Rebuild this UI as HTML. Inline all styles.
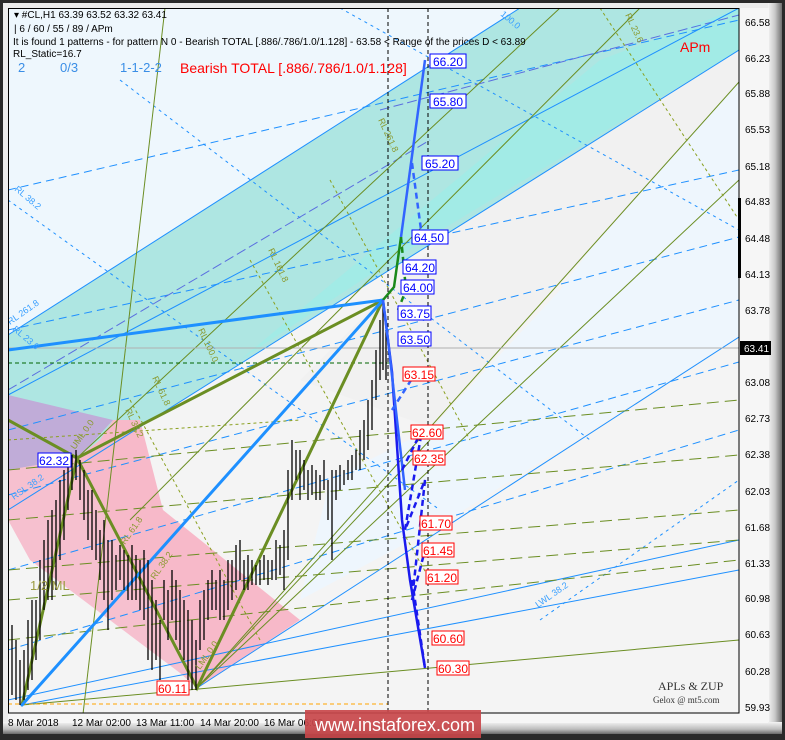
<!DOCTYPE html>
<html><head><meta charset="utf-8"><style>
html,body{margin:0;padding:0;width:785px;height:740px;overflow:hidden;background:#2a2a2a}
svg{display:block}
text{font-family:"Liberation Sans",sans-serif}
</style></head><body>
<svg width="785" height="740" viewBox="0 0 785 740" xmlns="http://www.w3.org/2000/svg">
<defs>
<linearGradient id="bev" x1="0" x2="1" y1="0" y2="0"><stop offset="0" stop-color="#f4f4f4"/><stop offset="0.5" stop-color="#c8c8c8"/><stop offset="1" stop-color="#707070"/></linearGradient>
<linearGradient id="bevb" x1="0" x2="0" y1="0" y2="1"><stop offset="0" stop-color="#f4f4f4"/><stop offset="0.6" stop-color="#bcbcbc"/><stop offset="1" stop-color="#6a6a6a"/></linearGradient>
<clipPath id="c"><rect x="8" y="8" width="731" height="705"/></clipPath>
</defs>
<rect x="0" y="0" width="785" height="740" fill="#2a2a2a"/>
<rect x="3" y="3" width="779" height="731" fill="#ececec"/>
<rect x="768" y="3" width="14" height="731" fill="url(#bev)"/>
<rect x="3" y="722" width="779" height="12" fill="url(#bevb)"/>
<rect x="739" y="8" width="30" height="714" fill="#f6f6f6"/>
<rect x="8" y="713" width="760" height="10" fill="#f6f6f6"/>

<g clip-path="url(#c)">
<rect x="8" y="8" width="731" height="705" fill="#f4f4f4"/>
<polygon points="8,8 520,8 8,340" fill="#eef7fd"/>
<!-- light blue wedge right -->
<polygon points="739,82 739,337 440,525 300,600 330,480 432,428 560,290 739,50" fill="#eef6fd"/>
<polygon points="432,428 739,82 739,50 560,160 440,240 300,380" fill="#f1f1f1"/>
<!-- cyan band -->
<polygon points="8,335 520,8 739,8 739,50 8,510" fill="#aee6e2"/>
<polygon points="240,360 600,60 739,8 739,50 400,255" fill="#a2ebe6"/>
<!-- purple -->
<polygon points="8,395 113,420 77,460 8,472" fill="#c0acd8"/>
<!-- pink -->
<polygon points="8,470 77,458 100,440 113,420 140,420 163,510 300,620 240,660 197,688 8,520" fill="#f7b9c9"/>
<polygon points="77,458 200,688 30,560 8,520 8,470" fill="#f6c0cf"/>

<g stroke="#1e90ff" stroke-width="1" stroke-dasharray="8,5" fill="none">
<line x1="8" y1="190" x2="739" y2="20"/>
<line x1="8" y1="330" x2="739" y2="170"/>
<line x1="8" y1="430" x2="739" y2="237"/>
<line x1="8" y1="495" x2="739" y2="300"/>
<line x1="8" y1="570" x2="739" y2="362"/>
<line x1="8" y1="650" x2="739" y2="430"/>
</g>
<g stroke="#1e90ff" stroke-width="1" stroke-dasharray="3,4" fill="none">
<line x1="120" y1="80" x2="590" y2="440"/>
<line x1="8" y1="200" x2="440" y2="510"/>
<line x1="340" y1="8" x2="739" y2="230"/>
<line x1="540" y1="620" x2="739" y2="480"/>
</g>
<g stroke="#5a6ee0" stroke-width="1" stroke-dasharray="10,4" fill="none">
<line x1="8" y1="390" x2="430" y2="140"/>
<line x1="380" y1="110" x2="739" y2="15"/>
</g>
<g stroke="#1e90ff" stroke-width="1" fill="none">
<line x1="8" y1="335" x2="520" y2="8"/>
<line x1="8" y1="510" x2="739" y2="50"/>
<line x1="8" y1="395" x2="739" y2="8"/>
<line x1="197" y1="688" x2="739" y2="337"/>
<line x1="22" y1="705" x2="739" y2="570"/>
<line x1="8" y1="700" x2="739" y2="540"/>
</g>
<g stroke="#6b8e23" stroke-width="1" fill="none">
<line x1="80" y1="740" x2="165" y2="8"/>
<line x1="197" y1="688" x2="739" y2="82"/>
<line x1="130" y1="520" x2="640" y2="8"/>
<line x1="77" y1="458" x2="560" y2="8"/>
<line x1="197" y1="688" x2="739" y2="180"/>
<line x1="22" y1="705" x2="739" y2="640"/>
<line x1="197" y1="688" x2="430" y2="440"/>
</g>
<g stroke="#6b8e23" stroke-width="1" stroke-dasharray="12,6" fill="none">
<line x1="8" y1="520" x2="739" y2="455"/>
<line x1="8" y1="570" x2="739" y2="510"/>
<line x1="8" y1="600" x2="739" y2="540"/>
<line x1="8" y1="640" x2="739" y2="560"/>
<line x1="8" y1="470" x2="739" y2="400"/>
</g>
<g stroke="#8aa020" stroke-width="1" stroke-dasharray="3,3" fill="none">
<line x1="250" y1="260" x2="430" y2="580"/>
<line x1="330" y1="180" x2="470" y2="440"/>
<line x1="130" y1="400" x2="260" y2="640"/>
<line x1="600" y1="8" x2="739" y2="220"/>
<line x1="8" y1="440" x2="300" y2="420"/>
</g>
<line x1="8" y1="348" x2="739" y2="348" stroke="#b0b0b0" stroke-width="1"/>
<line x1="8" y1="363" x2="390" y2="363" stroke="#006400" stroke-width="1" stroke-dasharray="4,3"/>
<line x1="8" y1="704" x2="388" y2="704" stroke="#ffa500" stroke-width="1" stroke-dasharray="4,3"/>
<g fill="none" stroke-linecap="round">
<polyline points="8,420 77,458 383,300" stroke="#6b8e23" stroke-width="3"/>
<polyline points="22,705 77,458 197,688 383,300" stroke="#6b8e23" stroke-width="3"/>
<line x1="197" y1="688" x2="383" y2="300" stroke="#6b8e23" stroke-width="2"/>
<line x1="8" y1="350" x2="383" y2="300" stroke="#1e90ff" stroke-width="3"/>
<line x1="22" y1="705" x2="383" y2="300" stroke="#1e90ff" stroke-width="3"/>
</g>
<path fill="none" stroke="#000" stroke-width="1.3" d="M12 625V695M16 640V700M20 660V705M24 650V700M28 620V690M32 600V680M36 600V660M40 560V640M44 540V610M48 520V600M52 510V600M56 500V590M60 480V560M64 470V540M68 460V510M72 455V490M76 450V480M80 460V500M84 470V520M88 490V540M92 490V550M96 510V560M100 530V580M104 520V600M108 540V630M112 540V600M116 555V590M120 545V580M124 550V590M128 555V600M132 545V600M136 555V600M140 560V610M144 550V620M148 560V660M152 580V670M156 600V660M160 620V680M164 580V620M168 590V640M172 570V620M176 580V640M180 590V650M184 600V660M188 610V680M192 620V690M196 640V690M200 600V650M204 590V640M208 580V620M212 570V610M216 580V610M220 570V620M224 580V620M228 560V610M232 560V600M236 545V590M240 540V580M244 560V590M248 555V590M252 560V585M256 565V585M260 560V585M264 555V580M268 560V585M272 560V580M276 540V580M280 545V575M284 530V590M288 470V560M292 440V500M296 450V480M300 450V500M304 460V490M308 470V500M312 465V495M316 470V500M320 475V500M324 460V490M328 480V520M332 470V560M336 470V500M340 465V490M344 470V485M348 460V480M352 455V480M356 450V470M360 430V470M364 420V460M368 400V450M372 380V430M376 350V400M380 320V380M383 300V370M386 330V380"/>
<line x1="388" y1="8" x2="388" y2="713" stroke="#000" stroke-dasharray="4,3"/>
<line x1="428" y1="8" x2="428" y2="713" stroke="#000" stroke-dasharray="4,3"/>
<g fill="none" stroke-width="2.5">
<polyline points="425,60 401,237" stroke="#3264ff"/>
<polyline points="412,163 422,237" stroke="#3264ff" stroke-dasharray="6,4"/>
<polyline points="401,237 394,287 383,300" stroke="#1a8a1a"/>
<polyline points="401,237 406,290 398,310" stroke="#1a8a1a" stroke-dasharray="6,4"/>
<polyline points="383,300 392,372 402,520 410,580 425,668" stroke="#1a1aee"/>
<polyline points="383,300 388,340 397,420 405,490" stroke="#3264ff"/>
<polyline points="392,410 415,374" stroke="#3264ff" stroke-dasharray="6,4"/>
<polyline points="402,470 422,430 405,530 425,480 412,600 425,550" stroke="#1a1aee" stroke-dasharray="6,4"/>
<polyline points="412,580 425,668" stroke="#1a1aee" stroke-dasharray="6,4"/>
</g>
<g font-size="9" fill="#8a9a30">
<text x="30" y="590" font-size="13" fill="#9a9a40">1/2 ML</text>
<text transform="translate(378,120) rotate(65)">RL 261.8</text>
<text transform="translate(268,250) rotate(65)">RL 161.8</text>
<text transform="translate(198,330) rotate(65)">RL 100.0</text>
<text transform="translate(152,378) rotate(65)">RL 61.8</text>
<text transform="translate(125,410) rotate(65)">RL 38.2</text>
<text transform="translate(125,545) rotate(-55)">RL 61.8</text>
<text transform="translate(155,580) rotate(-55)">RL 38.2</text>
<text transform="translate(75,450) rotate(-55)">UML 0.0</text>
<text transform="translate(200,670) rotate(-55)">LML 0.0</text>
<text transform="translate(625,15) rotate(65)">RL 23.6</text>
</g>
<g font-size="9" fill="#3aa0ff">
<text transform="translate(14,190) rotate(40)">RL 38.2</text>
<text transform="translate(10,325) rotate(-35)">RL 261.8</text>
<text transform="translate(12,330) rotate(40)">RL 23.6</text>
<text transform="translate(14,500) rotate(-35)">RSL 38.2</text>
<text transform="translate(538,608) rotate(-35)">LWL 38.2</text>
<text transform="translate(500,15) rotate(40)">100.0</text>
</g>
</g>
<rect x="8.5" y="8.5" width="730.5" height="704.5" fill="none" stroke="#000"/>

<g font-size="12" fill="#00f">
<g stroke="#00f" fill="#fff"><rect x="38" y="453" width="33" height="14"/><rect x="430" y="54" width="36" height="14"/><rect x="430" y="94" width="36" height="14"/><rect x="422" y="156" width="36" height="14"/><rect x="412" y="230" width="36" height="14"/><rect x="403" y="260" width="33" height="14"/><rect x="401" y="280" width="33" height="14"/><rect x="398" y="306" width="33" height="14"/><rect x="398" y="332" width="33" height="14"/></g>
<text x="39" y="465">62.32</text><text x="433" y="66">66.20</text><text x="433" y="106">65.80</text><text x="425" y="168">65.20</text><text x="414" y="242">64.50</text><text x="405" y="272">64.20</text><text x="403" y="292">64.00</text><text x="400" y="318">63.75</text><text x="400" y="344">63.50</text>
</g>
<g font-size="12" fill="#f00">
<g stroke="#f00" fill="#fff"><rect x="157" y="681" width="32" height="14"/><rect x="403" y="367" width="32" height="14"/><rect x="411" y="425" width="32" height="14"/><rect x="413" y="451" width="32" height="14"/><rect x="420" y="516" width="32" height="14"/><rect x="422" y="543" width="32" height="14"/><rect x="426" y="570" width="32" height="14"/><rect x="432" y="631" width="32" height="14"/><rect x="437" y="661" width="32" height="14"/></g>
<text x="158" y="693">60.11</text><text x="404" y="379">63.15</text><text x="412" y="437">62.60</text><text x="414" y="463">62.35</text><text x="421" y="528">61.70</text><text x="423" y="555">61.45</text><text x="427" y="582">61.20</text><text x="433" y="643">60.60</text><text x="438" y="673">60.30</text>
</g>

<g font-size="10" fill="#000">
<text x="14" y="18">▾ #CL,H1  63.39 63.52 63.32 63.41</text>
<text x="14" y="32">| 6 / 60 / 55 / 89 / APm</text>
<text x="13" y="45">It is found 1 patterns  -  for pattern N 0 - Bearish TOTAL [.886/.786/1.0/1.128] - 63.58 &lt; Range of the prices D &lt; 63.89</text>
<text x="13" y="57">RL_Static=16.7</text>
</g>
<g font-size="13" fill="#3a8ee6"><text x="18" y="72">2</text><text x="60" y="72">0/3</text><text x="120" y="72">1-1-2-2</text></g>
<text x="180" y="73" font-size="14" fill="#f00">Bearish TOTAL [.886/.786/1.0/1.128]</text>
<text x="680" y="52" font-size="14" fill="#f00">APm</text>
<text x="658" y="690" font-size="12" fill="#333" style="font-family:'Liberation Serif',serif">APLs &amp; ZUP</text>
<text x="653" y="703" font-size="9" fill="#333" style="font-family:'Liberation Serif',serif">Gelox @ mt5.com</text>

<rect x="738" y="198" width="3" height="80" fill="#000"/>
<g font-size="10" fill="#000">
<text x="745" y="26">66.58</text><text x="745" y="62">66.23</text><text x="745" y="97">65.88</text><text x="745" y="133">65.53</text><text x="745" y="170">65.18</text><text x="745" y="205">64.83</text><text x="745" y="242">64.48</text><text x="745" y="278">64.13</text><text x="745" y="314">63.78</text><text x="745" y="386">63.08</text><text x="745" y="422">62.73</text><text x="745" y="458">62.38</text><text x="745" y="495">62.03</text><text x="745" y="531">61.68</text><text x="745" y="567">61.33</text><text x="745" y="602">60.98</text><text x="745" y="638">60.63</text><text x="745" y="675">60.28</text><text x="745" y="711">59.93</text>
</g>
<rect x="740" y="341" width="31" height="14" fill="#000"/>
<text x="744" y="352" font-size="10" fill="#fff">63.41</text>
<g font-size="10" fill="#000">
<text x="8" y="726">8 Mar 2018</text><text x="72" y="726">12 Mar 02:00</text><text x="136" y="726">13 Mar 11:00</text><text x="200" y="726">14 Mar 20:00</text><text x="264" y="726">16 Mar 06:00</text>
</g>
<rect x="305" y="710" width="176" height="28" fill="#c8464a" opacity="0.92"/>
<text x="315" y="731" font-size="18" fill="#fff">www.instaforex.com</text>
</svg>
</body></html>
